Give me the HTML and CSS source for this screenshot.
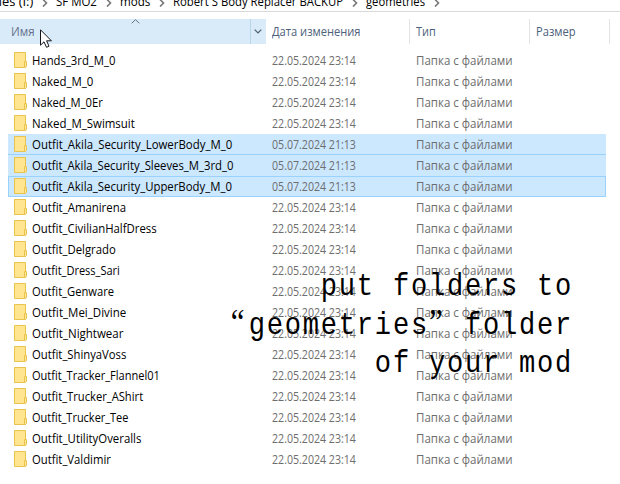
FILE: index.html
```
<!DOCTYPE html>
<html lang="ru">
<head>
<meta charset="utf-8">
<title>geometries</title>
<link rel="stylesheet" href="styles.css">
</head>
<body>
<nav class="crumbs">
  <span class="crumb first"><span class="fit" data-w="43">mes (I:)</span></span>
  <svg class="chev" viewBox="0 0 6 8"><path d="M1 0.5L4.5 4L1 7.5"/></svg>
  <span class="crumb c2"><span class="fit" data-w="41">SF MO2</span></span>
  <svg class="chev" viewBox="0 0 6 8"><path d="M1 0.5L4.5 4L1 7.5"/></svg>
  <span class="crumb c3"><span class="fit" data-w="30">mods</span></span>
  <svg class="chev" viewBox="0 0 6 8"><path d="M1 0.5L4.5 4L1 7.5"/></svg>
  <span class="crumb c4"><span class="fit" data-w="170">Robert S Body Replacer BACKUP</span></span>
  <svg class="chev" viewBox="0 0 6 8"><path d="M1 0.5L4.5 4L1 7.5"/></svg>
  <span class="crumb c5"><span class="fit" data-w="59">geometries</span></span>
  <svg class="chev" viewBox="0 0 6 8"><path d="M1 0.5L4.5 4L1 7.5"/></svg>
</nav>
<header class="head">
  <div class="th name"><span class="fit" data-w="24">Имя</span>
    <svg class="sort" viewBox="0 0 9 5"><path d="M0.7 4.3L4.5 0.7L8.3 4.3"/></svg>
  </div>
  <div class="drop"><svg viewBox="0 0 8 5"><path d="M0.7 0.7L4 4L7.3 0.7"/></svg></div>
  <div class="th date"><span class="fit" data-w="88">Дата изменения</span></div>
  <div class="th type"><span class="fit" data-w="20">Тип</span></div>
  <div class="th size"><span class="fit" data-w="40">Размер</span></div>
</header>
<main class="list" id="list"></main>
<p class="note">put folders to<br><span class="quote">“</span>geometries<span class="quote">”</span> folder<br>of your mod</p>
<svg class="cursor" viewBox="0 0 12 19"><path d="M0.5 0.8V16.2L4 12.8L6.5 18.3L9 17.2L6.6 11.8H11.4Z"/></svg>
<script src="list.js"></script>
</body>
</html>
```
FILE: styles.css
```
* { box-sizing: border-box; }
body {
  margin: 0;
  width: 620px;
  height: 484px;
  overflow: hidden;
  position: relative;
  background: #fff;
  color: #000;
  font: 12px/21px "Open Sans", "Noto Sans", sans-serif;
}
.fit { display: inline-block; white-space: pre; transform-origin: 0 50%; }
.crumbs {
  display: flex;
  height: 12px;
  border-bottom: 1px solid #d9d9d9;
  overflow: hidden;
}
.crumb { flex: none; height: 21px; margin-top: -9px; white-space: nowrap; }
.first { width: 42px; }
.first .fit { margin-left: -10px; }
.c2 { width: 50px; margin-left: 8px; }
.c3 { width: 39px; margin-left: 8px; }
.c4 { width: 179px; margin-left: 8px; }
.c5 { width: 68px; margin-left: 8px; }
.chev { flex: none; width: 6px; height: 8px; margin-top: -1px; fill: none; stroke: #777; stroke-width: 1.6; }
.head { display: flex; height: 25px; margin-top: 7px; color: #4c607a; line-height: 25px; }
.th { flex: none; white-space: nowrap; }
.name { position: relative; width: 251px; padding-left: 11px; background: #d9ebf9; border-right: 1px solid #b9d5e9; color: #65718c; }
.sort { position: absolute; left: 131px; top: 0; width: 9px; height: 5px; fill: none; stroke: #66717b; }
.drop { width: 15px; display: flex; align-items: center; justify-content: center; background: #d9ebf9; }
.drop svg { width: 8px; height: 5px; margin-right: 1px; fill: none; stroke: #4f5d68; stroke-width: 1.2; }
.date { width: 144px; padding-left: 6px; border-right: 1px solid #e3e3e3; }
.type { width: 120px; padding-left: 6px; border-right: 1px solid #e3e3e3; }
.size { width: 80px; padding-left: 6px; border-right: 1px solid #e3e3e3; }
.list { margin: 6px 0 0 8px; width: 598px; }
.row { display: grid; grid-template-columns: 24px 240px 144px 190px; height: 21px; }
.row > span { white-space: nowrap; }
.row .meta { color: #6d6d6d; }
.selected { background: #cce8ff; box-shadow: inset 0 -1px #99d1ff; }
.before-focused { box-shadow: none; }
.focused { box-shadow: inset 0 0 0 1px #99d1ff, inset 0 1px #7fc5ff; }
.folder { width: 14px; height: 17px; margin: 1px 0 0 6px; }
.note {
  position: absolute;
  right: 47px;
  top: 268px;
  margin: 0;
  text-align: right;
  white-space: nowrap;
  font: 31.5px/38.6px "Liberation Mono", monospace;
  letter-spacing: 2.05px;
  transform: scaleX(0.86);
  transform-origin: 100% 0;
}
.quote {
  display: inline-block;
  width: 20.95px;
  font: 36px/30px "Liberation Serif", serif;
  letter-spacing: 0;
  text-align: left;
}
.cursor { position: absolute; left: 40px; top: 29px; width: 12px; height: 19px; fill: #fff; stroke: #15151d; stroke-width: 1; }
```
FILE: list.js
```
// Folder name and the width of its label in pixels.
const folders = [
  ["Hands_3rd_M_0", 83], ["Naked_M_0", 61], ["Naked_M_0Er", 71], ["Naked_M_Swimsuit", 103],
  ["Outfit_Akila_Security_LowerBody_M_0", 200], ["Outfit_Akila_Security_Sleeves_M_3rd_0", 201],
  ["Outfit_Akila_Security_UpperBody_M_0", 200], ["Outfit_Amanirena", 94],
  ["Outfit_CivilianHalfDress", 125], ["Outfit_Delgrado", 84], ["Outfit_Dress_Sari", 88],
  ["Outfit_Genware", 82], ["Outfit_Mei_Divine", 94], ["Outfit_Nightwear", 91],
  ["Outfit_ShinyaVoss", 94], ["Outfit_Tracker_Flannel01", 128], ["Outfit_Trucker_AShirt", 111],
  ["Outfit_Trucker_Tee", 96], ["Outfit_UtilityOveralls", 109], ["Outfit_Valdimir", 79]
];
const states = { 4: "selected", 5: "selected before-focused", 6: "selected focused" };
const icon = '<svg class="folder" viewBox="0 0 14 17"><path d="M0.5 1.5H11.5V16.5H0.5Z" fill="#ffe58f" stroke="#e9c34c"/><path d="M10.5 10.5H12.5V15.5L11.5 16.5H10.5Z" fill="#ffe694" stroke="#e9c34c"/></svg>';

document.getElementById("list").innerHTML = folders.map(([name, w], i) => {
  const date = states[i] ? "05.07.2024 21:13" : "22.05.2024 23:14";
  return `<div class="row ${states[i] || ""}">${icon}` +
    `<span><span class="fit" data-w="${w}">${name}</span></span>` +
    `<span class="meta"><span class="fit" data-w="84">${date}</span></span>` +
    `<span class="meta"><span class="fit" data-w="97">Папка с файлами</span></span></div>`;
}).join("");

document.querySelectorAll(".fit").forEach(el => {
  el.style.transform = `scaleX(${el.dataset.w / el.offsetWidth})`;
});
```
